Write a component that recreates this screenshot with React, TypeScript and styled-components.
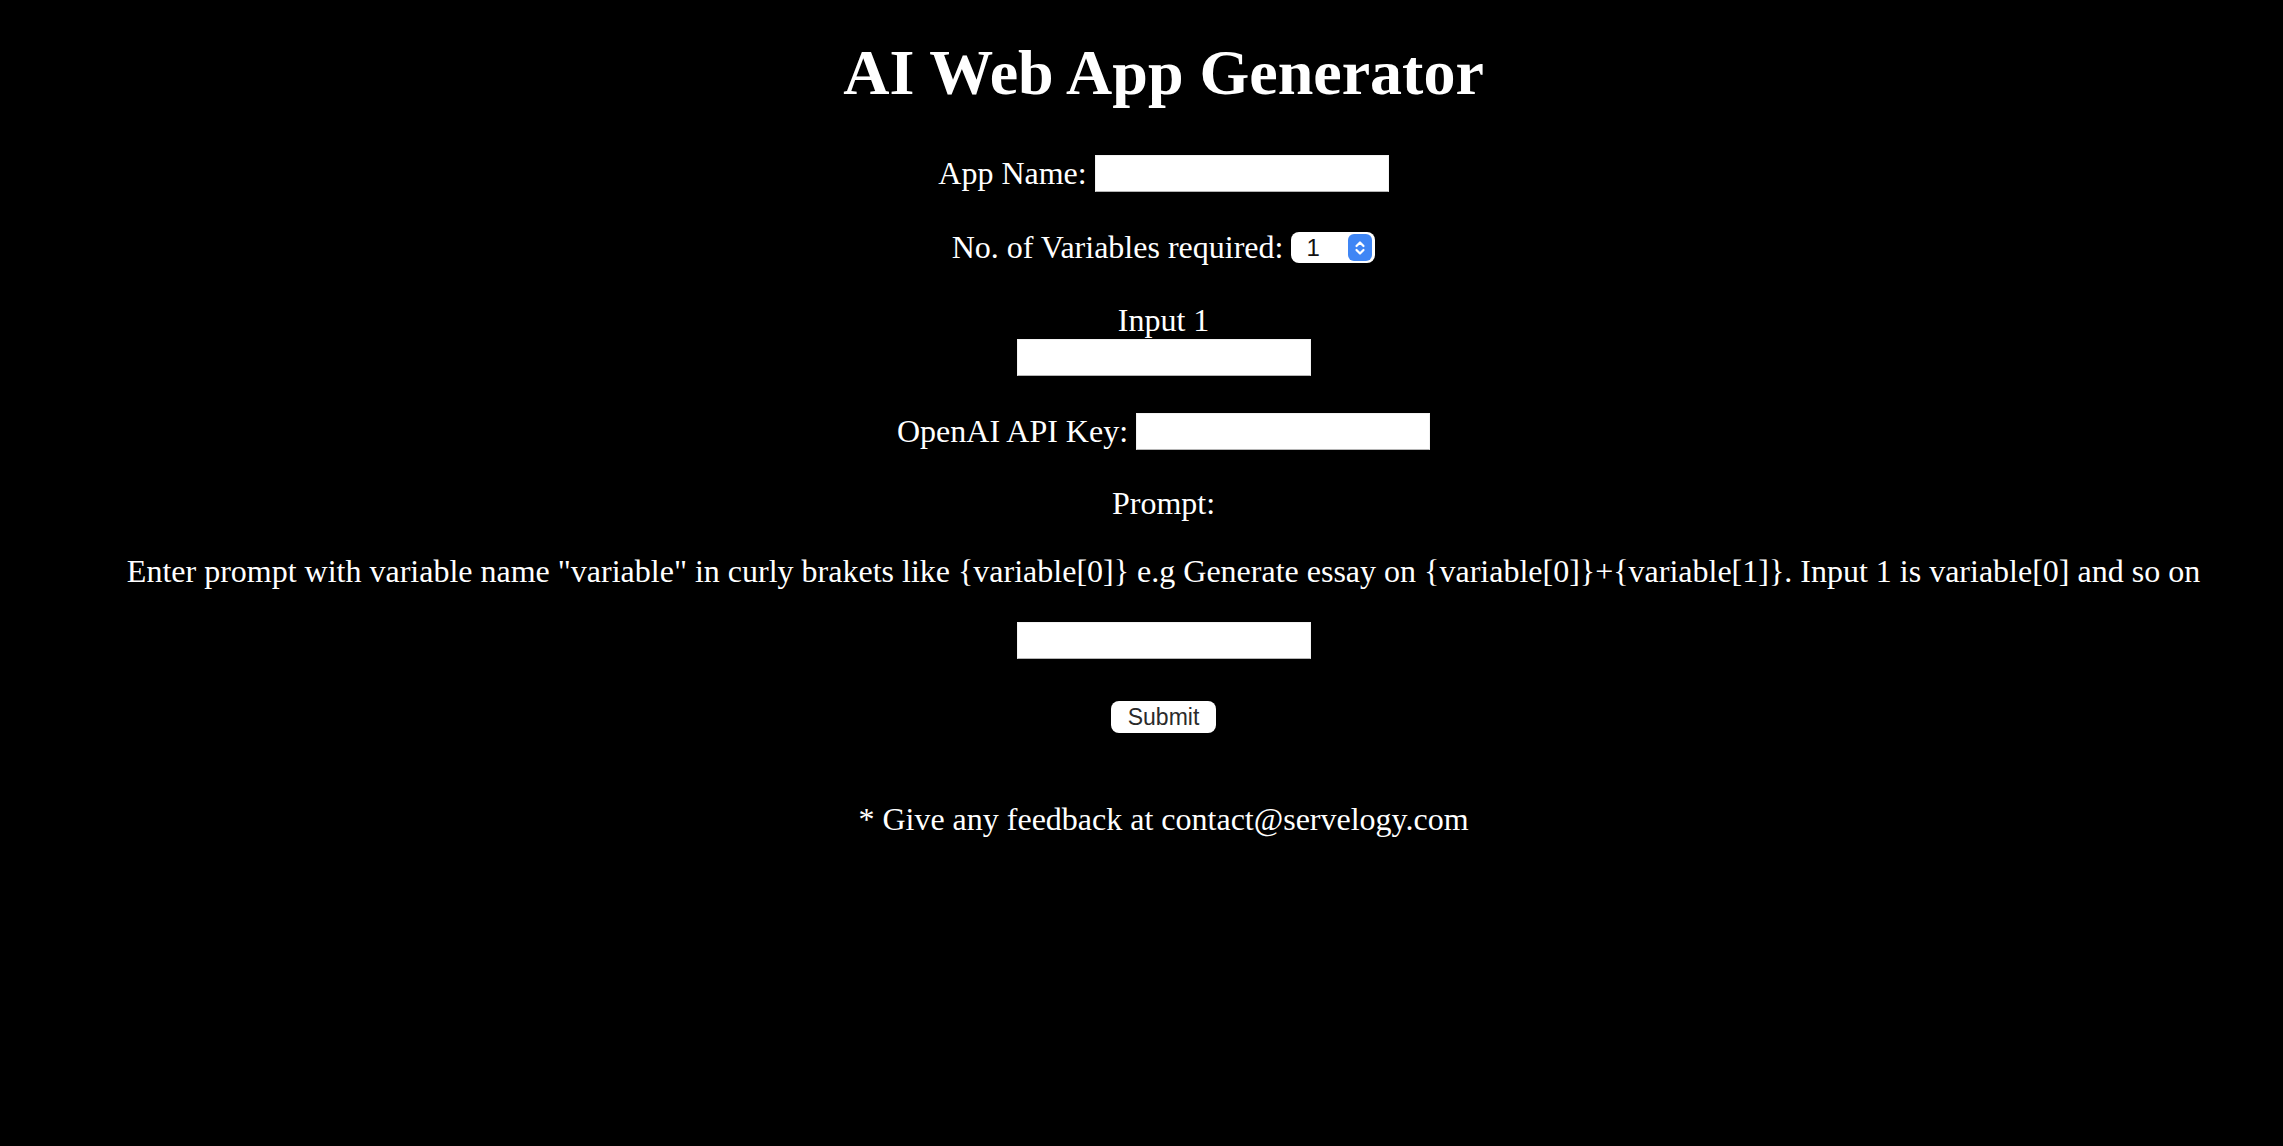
import React from "react";
import styled, { createGlobalStyle } from "styled-components";

const GlobalStyle = createGlobalStyle`
    html, body {
        margin: 0;
        padding: 0;
        background: #000;
    }
    body {
        color: #fff;
        font-family: "Liberation Serif", "Times New Roman", serif;
        font-size: 32px;
        line-height: 37px;
    }
`;

////////////////////////////////////// Página
const Pagina = styled.main`
    display: flex;
    flex-direction: column;
    align-items: center;
    min-height: 1146px;
    box-sizing: border-box;
    padding: 36px 0 0 44px;
    text-align: center;
`;

const Titulo = styled.h1`
    margin: 0;
    font-size: 64px;
    line-height: 74px;
    font-weight: 700;
`;
//////////////////////////////////////

////////////////////////////////////// Linhas do formulário
interface LinhaProps {
    topo: number;
}

const Linha = styled.div<LinhaProps>`
    display: flex;
    align-items: center;
    justify-content: center;
    gap: 8px;
    margin-top: ${props => props.topo}px;
    min-height: 37px;
`;

const Texto = styled.p<LinhaProps>`
    margin: ${props => props.topo}px 0 0;
    white-space: nowrap;
`;

const Label = styled.label`
    white-space: nowrap;
`;

const CampoTexto = styled.input<{ topo?: number }>`
    box-sizing: border-box;
    width: 294px;
    height: 37px;
    margin: ${props => props.topo ?? 0}px 0 0;
    padding: 0 6px;
    background: #fff;
    border: 1px solid #f2f2f2;
    border-bottom-color: #b5b5b5;
    outline: none;
    font-family: "Liberation Sans", Arial, sans-serif;
    font-size: 22px;
`;
//////////////////////////////////////

////////////////////////////////////// Select
const SelectCaixa = styled.div`
    position: relative;
    width: 84px;
    height: 31px;
`;

const Select = styled.select`
    appearance: none;
    -webkit-appearance: none;
    display: block;
    box-sizing: border-box;
    width: 100%;
    height: 100%;
    margin: 0;
    padding: 0 0 0 15px;
    background: #fff;
    border: none;
    border-radius: 8px;
    color: #111;
    font-family: "Liberation Sans", Arial, sans-serif;
    font-size: 24px;
    outline: none;
`;

const Stepper = styled.span`
    position: absolute;
    right: 3px;
    top: 2px;
    width: 24px;
    height: 27px;
    border-radius: 6px;
    background: #3f86f5;
    display: flex;
    align-items: center;
    justify-content: center;
    pointer-events: none;
`;
//////////////////////////////////////

const BotaoEnviar = styled.button`
    box-sizing: border-box;
    width: 105px;
    height: 32px;
    margin-top: 42px;
    padding: 0;
    background: #fff;
    border: none;
    border-radius: 8px;
    color: #2a2a2a;
    font-family: "Liberation Sans", Arial, sans-serif;
    font-size: 23px;
    line-height: 32px;
`;

export default function App() {
    return (
        <>
            <GlobalStyle />
            <Pagina>
                <Titulo>AI Web App Generator</Titulo>

                <Linha topo={45}>
                    <Label htmlFor="appname">App Name:</Label>
                    <CampoTexto id="appname" type="text" />
                </Linha>

                <Linha topo={37}>
                    <Label htmlFor="numvars">No. of Variables required:</Label>
                    <SelectCaixa>
                        <Select id="numvars" defaultValue="1">
                            <option value="1">1</option>
                            <option value="2">2</option>
                            <option value="3">3</option>
                            <option value="4">4</option>
                            <option value="5">5</option>
                        </Select>
                        <Stepper>
                            <svg width="12" height="18" viewBox="0 0 12 18" fill="none" stroke="#fff" strokeWidth="2.2" strokeLinecap="round" strokeLinejoin="round">
                                <polyline points="2.5,7 6,3.5 9.5,7" />
                                <polyline points="2.5,11 6,14.5 9.5,11" />
                            </svg>
                        </Stepper>
                    </SelectCaixa>
                </Linha>

                <Texto topo={36}>Input 1</Texto>
                <CampoTexto type="text" />

                <Linha topo={37}>
                    <Label htmlFor="apikey">OpenAI API Key:</Label>
                    <CampoTexto id="apikey" type="text" />
                </Linha>

                <Texto topo={35}>Prompt:</Texto>
                <Texto topo={31}>
                    Enter prompt with variable name "variable" in curly brakets like {"{variable[0]}"} e.g Generate essay on {"{variable[0]}+{variable[1]}"}. Input 1 is variable[0] and so on
                </Texto>
                <CampoTexto type="text" topo={32} />

                <BotaoEnviar type="submit">Submit</BotaoEnviar>

                <Texto topo={68}>* Give any feedback at contact@servelogy.com</Texto>
            </Pagina>
        </>
    );
}
